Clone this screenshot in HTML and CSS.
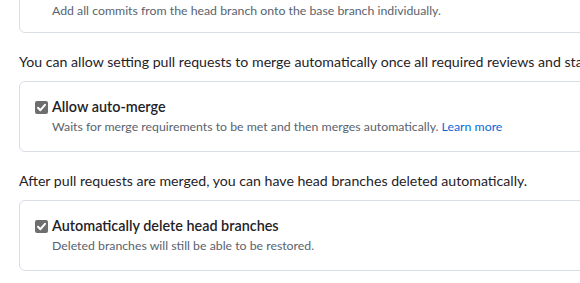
FILE: index.html
```html
<!DOCTYPE html>
<html lang="en">
<head>
<meta charset="utf-8">
<link rel="stylesheet" href="styles.css">
</head>
<body>
<div class="page">
  <div class="box box-cut">
    <div class="opt">
      <span class="spacer"></span>
      <div class="opt-text">
        <div class="desc">Add all commits from the head branch onto the base branch individually.</div>
      </div>
    </div>
  </div>

  <p class="lead">You can allow setting pull requests to merge automatically once all required reviews and status checks have passed.</p>
  <div class="box">
    <label class="opt">
      <span class="check"><svg viewBox="0 0 13 13" width="13" height="13"><path d="M3 6.8 L5.4 9.2 L10 3.8" fill="none" stroke="#fff" stroke-width="2" stroke-linecap="round" stroke-linejoin="round"/></svg></span>
      <div class="opt-text">
        <div class="title">Allow auto-merge</div>
        <div class="desc">Waits for merge requirements to be met and then merges automatically. <a class="link" href="#">Learn more</a></div>
      </div>
    </label>
  </div>

  <p class="lead">After pull requests are merged, you can have head branches deleted automatically.</p>
  <div class="box">
    <label class="opt">
      <span class="check"><svg viewBox="0 0 13 13" width="13" height="13"><path d="M3 6.8 L5.4 9.2 L10 3.8" fill="none" stroke="#fff" stroke-width="2" stroke-linecap="round" stroke-linejoin="round"/></svg></span>
      <div class="opt-text">
        <div class="title">Automatically delete head branches</div>
        <div class="desc">Deleted branches will still be able to be restored.</div>
      </div>
    </label>
  </div>
</div>
</body>
</html>
```
FILE: styles.css
```css
* { box-sizing: border-box; }
html, body { margin: 0; padding: 0; background: #fff; }
body {
  font-family: Lato, "Noto Sans", sans-serif;
  color: #1f2328;
  overflow: hidden;
}
.page {
  padding-left: 19px;
  width: 720px;
  margin-top: -6px;
}
.box {
  border: 1px solid #d8dee4;
  border-radius: 6px;
  padding: 15px 16px 15px 15px;
}
.box-cut { padding-top: 6px; padding-bottom: 12px; }
.opt {
  display: flex;
  gap: 4px;
  align-items: flex-start;
}
.spacer { width: 13px; flex: none; }
.check {
  flex: none;
  width: 13px;
  height: 13px;
  margin-top: 4px;
  border-radius: 2px;
  background: #6e6e6e;
  display: flex;
}
.check svg { display: block; }
.title {
  font-size: 14.4px;
  font-weight: 600;
  line-height: 20px;
  color: #1f2328;
}
.desc {
  font-size: 12.3px;
  line-height: 18px;
  color: #59636e;
  margin-top: 1px;
}
.link { color: #0969da; text-decoration: none; }
.lead {
  font-size: 14.15px;
  line-height: 21px;
  margin: 18px 0 9px 0;
  white-space: nowrap;
}
```
